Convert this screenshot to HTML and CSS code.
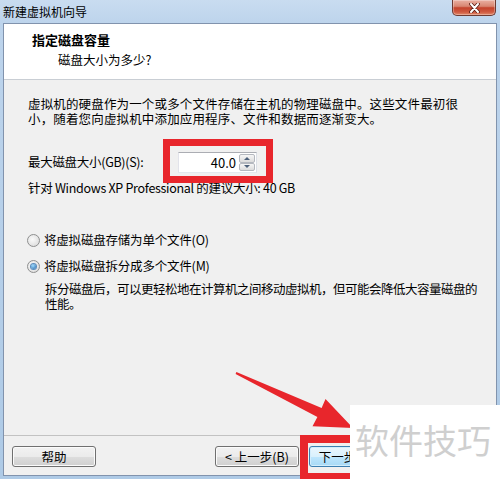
FILE: index.html
```html
<!DOCTYPE html>
<html lang="zh-CN">
<head>
    <meta charset="UTF-8">
    <title>新建虚拟机向导</title>
    <link rel="stylesheet" href="styles.css">
</head>
<body>
    <div class="window">
        <div class="titlebar">
            <span class="title">新建虚拟机向导</span>
            <div class="close">
                <svg width="13" height="10" viewBox="0 0 13 10">
                    <path d="M3 1 L10 9 M10 1 L3 9" stroke="#5a1d14" stroke-width="3.6" stroke-linecap="round"/>
                    <path d="M3 1 L10 9 M10 1 L3 9" stroke="#fff" stroke-width="2" stroke-linecap="round"/>
                </svg>
            </div>
        </div>

        <div class="client">
            <div class="header">
                <div class="h-title">指定磁盘容量</div>
                <div class="h-sub">磁盘大小为多少?</div>
            </div>

            <div class="body">
                <p class="intro">虚拟机的硬盘作为一个或多个文件存储在主机的物理磁盘中。这些文件最初很<br>小，随着您向虚拟机中添加应用程序、文件和数据而逐渐变大。</p>

                <div class="size-row">
                    <span class="size-label">最大磁盘大小(GB)(S):</span>
                    <div class="mark">
                        <div class="spin">
                            <span class="spin-value">40.0</span>
                            <div class="spin-btns">
                                <div class="spin-btn"><i class="arrow-up"></i></div>
                                <div class="spin-btn"><i class="arrow-down"></i></div>
                            </div>
                        </div>
                    </div>
                </div>

                <p class="hint">针对 Windows XP Professional 的建议大小: 40 GB</p>

                <div class="radio first">
                    <span class="radio-dot"></span>
                    <span>将虚拟磁盘存储为单个文件(O)</span>
                </div>
                <div class="radio">
                    <span class="radio-dot checked"></span>
                    <span>将虚拟磁盘拆分成多个文件(M)</span>
                </div>
                <p class="desc">拆分磁盘后，可以更轻松地在计算机之间移动虚拟机，但可能会降低大容量磁盘的<br>性能。</p>
            </div>

            <div class="footer">
                <button class="btn">帮助</button>
                <button class="btn prev">&lt; 上一步(B)</button>
                <div class="mark next-mark">
                    <button class="btn primary">下一步(N) &gt;</button>
                </div>
            </div>
        </div>

        <svg class="arrow" width="500" height="479" viewBox="0 0 500 479">
            <polygon points="236.4,372.1 321.6,408.1 325.5,399 353,428 312.5,426.2 317.4,417.1 235.6,373.9" fill="#e8262c"/>
        </svg>

        <div class="watermark">软件技巧</div>
    </div>
</body>
</html>
```

FILE: styles.css
```css
html, body {
    margin: 0;
    width: 500px;
    height: 479px;
    overflow: hidden;
}
body {
    font-family: "Noto Sans CJK SC", "Noto Sans", sans-serif;
    font-size: 12.5px;
    color: #000;
    background: #bcd3ea;
}
.window {
    position: relative;
    height: 479px;
    box-sizing: border-box;
    padding: 0 3px 3px 3px;
    display: flex;
    flex-direction: column;
    background: linear-gradient(to bottom, #c9dcf0 0, #bdd4ec 23px, #aecae6 100%);
}
.titlebar {
    height: 23px;
    display: flex;
    align-items: flex-start;
}
.title {
    font-size: 12px;
    line-height: 16px;
    padding-top: 4px;
}
.close {
    margin-left: auto;
    margin-right: 1px;
    width: 44px;
    height: 16px;
    box-sizing: border-box;
    border: 1px solid #6d3a32;
    border-top: none;
    border-radius: 0 0 5px 5px;
    background: linear-gradient(to bottom, #eab0a2 0%, #d88672 42%, #c4432c 52%, #cf5a40 80%, #e28b6c 100%);
    box-shadow: inset 0 0 0 1px rgba(255,255,255,0.3);
    display: flex;
    align-items: center;
    justify-content: center;
}
.client {
    flex: 1;
    border: 1px solid #8193ad;
    background: #f0f0f0;
    display: flex;
    flex-direction: column;
}
.header {
    height: 56px;
    box-sizing: border-box;
    background: #fff;
    border-bottom: 1px solid #c9ced4;
    padding: 8px 0 0 28px;
}
.h-title {
    font-weight: bold;
    font-size: 13px;
    line-height: 16px;
}
.h-sub {
    margin: 4px 0 0 26px;
    line-height: 16px;
}
.body {
    flex: 1;
    padding: 16px 0 0 24px;
}
p {
    margin: 0;
}
.intro {
    line-height: 15px;
    letter-spacing: 0.15px;
}
.size-row {
    margin-top: 13px;
    display: flex;
    align-items: center;
}
.size-label {
    width: 135px;
    letter-spacing: -0.3px;
}
.mark {
    position: relative;
    border: 7px solid #e8262c;
    padding: 6px 9px 3px 8px;
}
.spin {
    width: 79px;
    height: 21px;
    box-sizing: border-box;
    background: #fff;
    border: 1px solid;
    border-color: #abadb3 #dbdfe6 #e3e9ef #e2e3ea;
    display: flex;
    align-items: center;
    justify-content: flex-end;
}
.spin-value {
    margin-right: 3px;
    font-size: 13px;
}
.spin-btns {
    width: 16px;
    height: 17px;
    margin-right: 1px;
    display: flex;
    flex-direction: column;
}
.spin-btn {
    flex: 1;
    border: 1px solid #b4b8bf;
    border-radius: 2px;
    background: linear-gradient(to bottom, #f6f6f6, #dcdcdc);
    display: flex;
    align-items: center;
    justify-content: center;
}
.arrow-up, .arrow-down {
    width: 0;
    height: 0;
    border-left: 3px solid transparent;
    border-right: 3px solid transparent;
}
.arrow-up {
    border-bottom: 3px solid #4c607a;
}
.arrow-down {
    border-top: 3px solid #4c607a;
}
.hint {
    margin-top: -3px;
    line-height: 16px;
    letter-spacing: -0.3px;
}
.radio {
    margin-top: 10px;
    display: flex;
    align-items: center;
    line-height: 16px;
    letter-spacing: -0.2px;
}
.radio.first {
    margin-top: 36px;
}
.radio-dot {
    width: 11px;
    height: 11px;
    margin: 0 4px 0 -1px;
    border: 1px solid #8e8f8f;
    border-radius: 50%;
    background: radial-gradient(circle at 40% 40%, #fafafa, #d6d6d6);
    display: flex;
    align-items: center;
    justify-content: center;
}
.radio-dot.checked::after {
    content: "";
    width: 5px;
    height: 5px;
    border-radius: 50%;
    background: radial-gradient(circle at 40% 35%, #9fdcff, #2064a8);
    box-shadow: 0 0 0 1px #5a8cbd;
}
.desc {
    margin: 7px 0 0 17px;
    line-height: 15px;
    letter-spacing: -0.5px;
}
.footer {
    height: 40px;
    box-sizing: border-box;
    border-top: 1px solid #c2c2c2;
    padding: 10px 0 0 8px;
    display: flex;
    align-items: flex-start;
}
.btn {
    width: 84px;
    height: 21px;
    padding: 0;
    font-family: inherit;
    font-size: 12.5px;
    color: #000;
    border: 1px solid #707070;
    border-radius: 3px;
    background: linear-gradient(to bottom, #f2f2f2 0%, #ebebeb 50%, #dddddd 51%, #cfcfcf 100%);
    box-shadow: inset 0 0 0 1px #fbfbfb;
}
.prev {
    margin-left: 119px;
}
.primary {
    border-color: #3c7fb1;
    background: linear-gradient(to bottom, #eaf6fd 0%, #d9f0fc 50%, #bee6fd 51%, #a7d9f5 100%);
    box-shadow: inset 0 0 0 1px #d2edfc;
}
.next-mark {
    margin: -11px 0 0 1px;
    border-width: 8px;
    padding: 3px 2px 6px 1px;
}
.arrow {
    position: absolute;
    left: 0;
    top: 0;
    pointer-events: none;
}
.watermark {
    position: absolute;
    left: 350px;
    top: 405px;
    width: 150px;
    height: 74px;
    box-sizing: border-box;
    padding: 15px 0 0 5px;
    background: #fff;
    color: #cfcfcf;
    font-size: 34px;
    line-height: 40px;
    white-space: nowrap;
}
```
